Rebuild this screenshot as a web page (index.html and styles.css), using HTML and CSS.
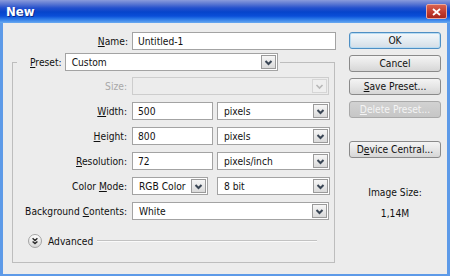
FILE: index.html
```html
<!DOCTYPE html>
<html lang="en">
<head>
    <meta charset="UTF-8">
    <title>New</title>
    <link rel="stylesheet" href="styles.css">
</head>
<body>
    <div class="window">
        <div class="titlebar">
            <span class="title">New</span>
            <span class="close">
                <svg width="9" height="8" viewBox="0 0 9 8"><path d="M1 1 L8 7 M8 1 L1 7" stroke="#fff" stroke-width="1.8"/></svg>
            </span>
        </div>
        <div class="dialog">
            <div class="form">
                <div class="name-row">
                    <span class="name-lbl"><u>N</u>ame:</span>
                    <span class="field name-field">Untitled-1</span>
                </div>
                <fieldset class="group">
                    <legend class="preset">
                        <span class="preset-lbl"><u>P</u>reset:</span>
                        <span class="select preset-select">Custom<span class="arrow"><svg width="13" height="13" viewBox="0 0 13 13"><path d="M3.5 5 L6.5 8 L9.5 5" fill="none" stroke="#3b4756" stroke-width="2"/></svg></span></span>
                    </legend>
                    <div class="row">
                        <span class="lbl disabled">Size:</span>
                        <span class="select full off"><span class="arrow"><svg width="13" height="13" viewBox="0 0 13 13"><path d="M3.5 5 L6.5 8 L9.5 5" fill="none" stroke="#b8b8b8" stroke-width="1.6"/></svg></span></span>
                    </div>
                    <div class="row">
                        <span class="lbl"><u>W</u>idth:</span>
                        <span class="field num">500</span>
                        <span class="select unit">pixels<span class="arrow"><svg width="13" height="13" viewBox="0 0 13 13"><path d="M3.5 5 L6.5 8 L9.5 5" fill="none" stroke="#3b4756" stroke-width="2"/></svg></span></span>
                    </div>
                    <div class="row">
                        <span class="lbl"><u>H</u>eight:</span>
                        <span class="field num">800</span>
                        <span class="select unit">pixels<span class="arrow"><svg width="13" height="13" viewBox="0 0 13 13"><path d="M3.5 5 L6.5 8 L9.5 5" fill="none" stroke="#3b4756" stroke-width="2"/></svg></span></span>
                    </div>
                    <div class="row">
                        <span class="lbl"><u>R</u>esolution:</span>
                        <span class="field num">72</span>
                        <span class="select unit">pixels/inch<span class="arrow"><svg width="13" height="13" viewBox="0 0 13 13"><path d="M3.5 5 L6.5 8 L9.5 5" fill="none" stroke="#3b4756" stroke-width="2"/></svg></span></span>
                    </div>
                    <div class="row">
                        <span class="lbl">Color <u>M</u>ode:</span>
                        <span class="select mode">RGB Color<span class="arrow"><svg width="13" height="13" viewBox="0 0 13 13"><path d="M3.5 5 L6.5 8 L9.5 5" fill="none" stroke="#3b4756" stroke-width="2"/></svg></span></span>
                        <span class="select unit bits">8 bit<span class="arrow"><svg width="13" height="13" viewBox="0 0 13 13"><path d="M3.5 5 L6.5 8 L9.5 5" fill="none" stroke="#3b4756" stroke-width="2"/></svg></span></span>
                    </div>
                    <div class="row">
                        <span class="lbl">Background <u>C</u>ontents:</span>
                        <span class="select full">White<span class="arrow"><svg width="13" height="13" viewBox="0 0 13 13"><path d="M3.5 5 L6.5 8 L9.5 5" fill="none" stroke="#3b4756" stroke-width="2"/></svg></span></span>
                    </div>
                    <div class="advanced">
                        <svg class="adv-icon" width="14" height="14" viewBox="0 0 14 14">
                            <defs>
                                <linearGradient id="adv" x1="0" y1="0" x2="0" y2="1">
                                    <stop offset="0" stop-color="#ffffff"/>
                                    <stop offset="1" stop-color="#d6d6d6"/>
                                </linearGradient>
                            </defs>
                            <circle cx="7" cy="7" r="6.5" fill="url(#adv)" stroke="#a3a3a3"/>
                            <path d="M4.6 4.3 L7 6.5 L9.4 4.3 M4.6 7.4 L7 9.6 L9.4 7.4" fill="none" stroke="#2b2b2b" stroke-width="1.4"/>
                        </svg>
                        <span class="adv-text">Advanced</span>
                        <span class="adv-line"></span>
                    </div>
                </fieldset>
            </div>
            <div class="side">
                <span class="btn default">OK</span>
                <span class="btn">Cancel</span>
                <span class="btn"><u>S</u>ave Preset...</span>
                <span class="btn off"><u>D</u>elete Preset...</span>
                <span class="btn device">D<u>e</u>vice Central...</span>
                <div class="image-size">
                    <div>Image Size:</div>
                    <div class="size-value">1,14M</div>
                </div>
            </div>
        </div>
    </div>
</body>
</html>
```

FILE: styles.css
```css
* {
    margin: 0;
    padding: 0;
    box-sizing: border-box;
}

body {
    background-color: #ececec;
    font-family: "DejaVu Sans Condensed", "Liberation Sans", sans-serif;
    font-size: 10.2px;
    color: #111;
    overflow: hidden;
}

u {
    text-decoration: underline;
    text-underline-offset: 1px;
}

.window {
    display: flex;
    flex-flow: column;
    width: 450px;
    height: 276px;
}

.titlebar {
    display: flex;
    justify-content: space-between;
    align-items: center;
    height: 23px;
    padding: 0 3px 0 6px;
    background: linear-gradient(#8a9bdc 0px, #5a76d2 4px, #2450cd 8px, #0644cb 12px, #0a4ed8 16px, #2a78e8 19px, #6aaaf0 23px);
}

.title {
    color: #fff;
    font-weight: bold;
    font-size: 13px;
    text-shadow: 1px 1px 0 #0a2a8a;
}

.close {
    display: flex;
    justify-content: center;
    align-items: center;
    width: 21px;
    height: 15px;
    border: 1px solid #e8a8a0;
    border-radius: 2px;
    background: linear-gradient(#d9614f, #c0392c 60%, #a8281e);
}

.dialog {
    display: flex;
    flex: 1;
    background-color: #ececec;
    border: solid #5d9ae8;
    border-width: 0 3px 2px 3px;
    padding-top: 9px;
}

.form {
    width: 334px;
}

.name-row {
    display: flex;
    align-items: center;
    height: 18px;
}

.name-lbl {
    width: 125px;
    margin-right: 4px;
    text-align: right;
}

.field,
.select {
    display: flex;
    align-items: center;
    height: 18px;
    background-color: #fff;
    border: 1px solid #a3a3a3;
    padding-left: 5px;
}

.name-field {
    width: 204px;
}

.group {
    width: 322px;
    margin: 3px 0 0 9px;
    border: 1px solid #bdbdbd;
    padding: 6px 4px 14px 0;
}

.preset {
    display: flex;
    align-items: center;
    margin-left: 4px;
    padding: 0 2px 0 13px;
}

.preset-lbl {
    margin-right: 3px;
}

.select {
    position: relative;
    padding-left: 6px;
}

.arrow {
    position: absolute;
    top: 1px;
    right: 1px;
    display: flex;
    justify-content: center;
    align-items: center;
    width: 15px;
    height: 14px;
    border: 1px solid #9a9a9a;
    background: linear-gradient(#f6f6f6, #dadada);
}

.preset-select {
    width: 213px;
}

.row {
    display: flex;
    align-items: center;
    height: 18px;
    margin-top: 7px;
}

.row:first-of-type {
    margin-top: 0;
}

.lbl {
    width: 114px;
    margin-right: 5px;
    text-align: right;
}

.disabled {
    color: #a8a8a8;
}

.full {
    width: 197px;
}

.off {
    background-color: #ececec;
    border-color: #cdcdcd;
}

.off .arrow {
    border-color: #d6d6d6;
    background: #efefef;
}

.num {
    width: 81px;
}

.unit {
    width: 113px;
    margin-left: 4px;
}

.mode {
    width: 76px;
}

.bits {
    margin-left: 9px;
}

.advanced {
    display: flex;
    align-items: center;
    height: 14px;
    margin-top: 14px;
    padding-left: 15px;
}

.adv-text {
    margin-left: 6px;
}

.adv-line {
    flex: 1;
    height: 2px;
    margin: 0 13px 0 4px;
    border-top: 1px solid #c2c2c2;
    border-bottom: 1px solid #fafafa;
}

.side {
    display: flex;
    flex-flow: column;
    width: 92px;
    margin-left: 12px;
}

.btn {
    display: block;
    height: 17px;
    margin-bottom: 6px;
    border: 1px solid #8a8a8a;
    border-radius: 3px;
    background: linear-gradient(#f4f4f4, #e6e6e6 50%, #d6d6d6);
    text-align: center;
    line-height: 15px;
}

.btn.default {
    border-color: #4e8fc4;
    background: linear-gradient(#f4f8fb, #e4ecf2 50%, #d4dde6);
    box-shadow: inset 0 0 0 1px #b8dcf2;
}

.btn.off {
    border-color: #a9a9a9;
    background: linear-gradient(#d2d2d2, #c6c6c6);
    color: #f4f4f4;
}

.btn.device {
    margin-top: 17px;
}

.image-size {
    margin-top: 22px;
    text-align: center;
    line-height: 13px;
}

.size-value {
    margin-top: 8px;
}
```
